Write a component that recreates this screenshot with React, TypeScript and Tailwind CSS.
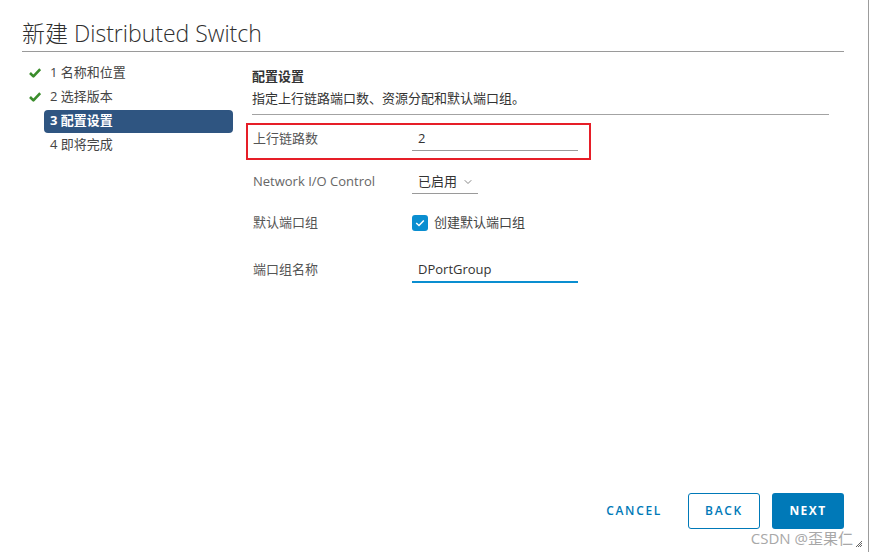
import { ChevronDown } from "lucide-react";

const font = { fontFamily: '"Open Sans", "Noto Sans CJK SC", sans-serif' };

const steps = [
  { label: "1 名称和位置", done: true },
  { label: "2 选择版本", done: true },
  { label: "3 配置设置", active: true },
  { label: "4 即将完成" },
];

function GreenCheck() {
  return (
    <svg width="12" height="10" viewBox="0 0 12 10" className="shrink-0">
      <path d="M1 5 L4.4 8.4 L11.2 1.2" fill="none" stroke="#3b8d2c" strokeWidth="2.6" strokeLinejoin="round" />
    </svg>
  );
}

function Sidebar() {
  return (
    <div className="flex w-[233px] shrink-0 flex-col pl-[29px]">
      {steps.map((s) => (
        <div key={s.label} className="flex h-[24px] items-center">
          <div className="flex w-[15px] shrink-0 items-center">{s.done && <GreenCheck />}</div>
          {s.active ? (
            <div className="flex h-[23px] flex-1 items-center rounded-[4px] bg-[#2f5581] pl-[6px] text-[13px] font-bold text-white">
              {s.label}
            </div>
          ) : (
            <div className="pl-[6px] text-[13px] text-[#454545]">{s.label}</div>
          )}
        </div>
      ))}
    </div>
  );
}

function Content() {
  return (
    <div className="flex w-[596px] flex-col pl-[13px]">
      <div className="ml-[6px] border-b border-[#a3a3a3] pb-[6px] pt-[5px]">
        <div className="h-[20px] text-[13px] font-semibold leading-[20px] text-[#333]">配置设置</div>
        <div className="mt-[2px] h-[20px] text-[13px] leading-[20px] text-[#333]">
          指定上行链路端口数、资源分配和默认端口组。
        </div>
      </div>

      <div className="mt-[8px] h-[37px] w-[345px] border-2 border-[#e61e28] pl-[5px]">
        <div className="flex">
          <div className="mt-[3px] w-[159px] text-[13px] leading-[20px] text-[#555]">上行链路数</div>
          <div className="mt-[2px] h-[24px] w-[166px] border-b border-[#9a9a9a] pl-[6px] text-[13px] leading-[22px] text-[#333]">
            2
          </div>
        </div>
      </div>

      <div className="mt-[9px] flex h-[26px] items-center pl-[7px]">
        <div className="w-[159px] text-[13px] text-[#666]">Network I/O Control</div>
        <div className="flex h-[24px] w-[66px] items-center border-b border-[#9a9a9a] pl-[6px] text-[13px] text-[#333]">
          已启用
          <ChevronDown size={12} className="ml-[5px] text-[#888]" />
        </div>
      </div>

      <div className="mt-[15px] flex h-[26px] items-center pl-[7px]">
        <div className="w-[159px] text-[13px] text-[#555]">默认端口组</div>
        <div className="flex items-center">
          <div className="flex h-[16px] w-[16px] items-center justify-center rounded-[3px] bg-[#0a8ed0]">
            <svg width="10" height="8" viewBox="0 0 10 8">
              <path d="M1.2 4 L4 6.5 L8.8 1.5" fill="none" stroke="white" strokeWidth="1.5" />
            </svg>
          </div>
          <span className="ml-[6px] text-[13px] text-[#444]">创建默认端口组</span>
        </div>
      </div>

      <div className="mt-[21px] flex h-[26px] items-center pl-[7px]">
        <div className="w-[159px] text-[13px] text-[#555]">端口组名称</div>
        <div className="h-[26px] w-[166px] border-b-2 border-[#0a8ed0] pl-[6px] text-[13px] leading-[24px] text-[#333]">
          DPortGroup
        </div>
      </div>
    </div>
  );
}

export default function App() {
  return (
    <div style={font} className="relative flex h-[552px] w-[869px] flex-col border-r border-[#9c9c9c] bg-white">
      <div className="ml-[22px] mr-[24px] border-b border-[#9a9a9a] pb-[4px] pt-[19px]">
        <div className="h-[28px] text-[23px] font-light leading-[28px] text-[#2f2f2f]">新建 Distributed Switch</div>
      </div>

      <div className="flex pt-[9px]">
        <Sidebar />
        <Content />
      </div>

      <div className="flex-1" />

      <div className="mr-[24px] flex items-center justify-end pb-[23px]">
        <button className="mr-[14px] h-[36px] px-[12px] text-[12px] font-semibold tracking-[0.14em] text-[#0079b8]">
          CANCEL
        </button>
        <button className="h-[36px] w-[72px] rounded-[3px] border border-[#0079b8] text-[12px] font-semibold tracking-[0.14em] text-[#0079b8]">
          BACK
        </button>
        <button className="ml-[12px] h-[36px] w-[72px] rounded-[3px] bg-[#0079b8] text-[12px] font-bold tracking-[0.12em] text-white">
          NEXT
        </button>
      </div>

      <div className="absolute bottom-[5px] right-[15px] text-[15px] leading-[18px] text-[#a8a8a8]">CSDN @歪果仁</div>
      <svg className="absolute bottom-[4px] right-[5px]" width="8" height="8" viewBox="0 0 8 8">
        <path d="M7 1 L1 7 M7 3 L3 7 M7 5 L5 7" stroke="#666" strokeWidth="1" />
      </svg>
    </div>
  );
}
